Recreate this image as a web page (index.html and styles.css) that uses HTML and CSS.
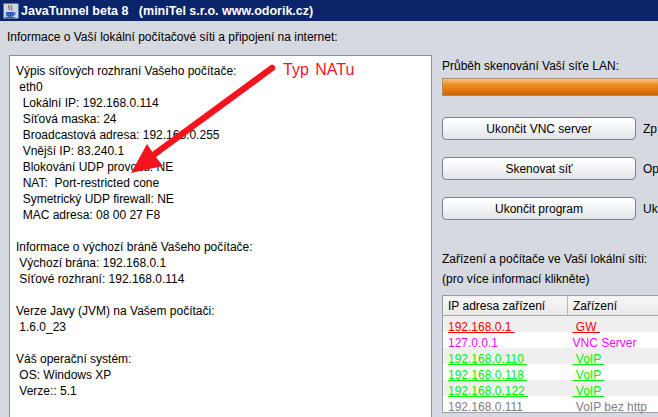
FILE: index.html
```html
<!DOCTYPE html>
<html lang="cs">
<head>
    <meta charset="UTF-8">
    <title>JavaTunnel beta 8</title>
    <link rel="stylesheet" href="styles.css">
</head>
<body>
    <div class="window">
        <div class="titlebar">
            <svg class="app-icon" width="16" height="16" viewBox="0 0 16 16">
                <rect x="0.5" y="0.5" width="15" height="15" rx="1" fill="#c9d6ea" stroke="#5b77a8"/>
                <path d="M6 2 C4.5 4 7.5 5 6 7" stroke="#e2531c" stroke-width="1.3" fill="none"/>
                <path d="M8.5 2.5 C7 4.5 10 5.5 8.5 7.5" stroke="#e2531c" stroke-width="1.3" fill="none"/>
                <path d="M3 9 h8 v2.5 c0 1.5 -1.5 2.5 -4 2.5 c-2.5 0 -4 -1 -4 -2.5 z" fill="#2f5fb0"/>
                <path d="M11 9.5 c2 0 2 2.5 0 2.5" stroke="#2f5fb0" stroke-width="1" fill="none"/>
                <rect x="2" y="14" width="10" height="1" fill="#2f5fb0"/>
            </svg>
            <span class="title">JavaTunnel beta 8   (miniTel s.r.o. www.odorik.cz)</span>
        </div>

        <div class="heading">Informace o Vaší lokální počítačové síti a připojení na internet:</div>

        <div class="main">
            <!-- výpis informací o síti -->
            <div class="info-panel">
<pre class="info">Výpis síťových rozhraní Vašeho počítače:
 eth0
  Lokální IP: 192.168.0.114
  Síťová maska: 24
  Broadcastová adresa: 192.168.0.255
  Vnější IP: 83.240.1
  Blokování UDP provozu: NE
  NAT:  Port-restricted cone
  Symetrický UDP firewall: NE
  MAC adresa: 08 00 27 F8

Informace o výchozí bráně Vašeho počítače:
 Výchozí brána: 192.168.0.1
 Síťové rozhraní: 192.168.0.114

Verze Javy (JVM) na Vašem počítači:
 1.6.0_23

Váš operační systém:
 OS: Windows XP
 Verze:: 5.1</pre>
            </div>

            <div class="side">
                <div class="label">Průběh skenování Vaší síťe LAN:</div>
                <div class="progress"></div>

                <div class="actions">
                    <div class="action">
                        <button class="button">Ukončit VNC server</button>
                        <span class="hint">Zp</span>
                    </div>
                    <div class="action">
                        <button class="button">Skenovat síť</button>
                        <span class="hint">Op</span>
                    </div>
                    <div class="action">
                        <button class="button">Ukončit program</button>
                        <span class="hint">Uk</span>
                    </div>
                </div>

                <div class="devices-label first">Zařízení a počítače ve Vaší lokální síti:</div>
                <div class="devices-label">(pro více informací klikněte)</div>

                <table class="devices">
                    <thead>
                        <tr><th class="col-ip">IP adresa zařízení</th><th>Zařízení</th></tr>
                    </thead>
                    <tbody>
                        <tr class="gw"><td><u>192.168.0.1 </u></td><td><u> GW </u></td></tr>
                        <tr class="vnc"><td>127.0.0.1</td><td>VNC Server</td></tr>
                        <tr class="voip"><td><u>192.168.0.110 </u></td><td><u> VoIP </u></td></tr>
                        <tr class="voip"><td><u>192.168.0.118 </u></td><td><u> VoIP </u></td></tr>
                        <tr class="voip"><td><u>192.168.0.122 </u></td><td><u> VoIP </u></td></tr>
                        <tr class="other"><td>192.168.0.111</td><td> VoIP bez http</td></tr>
                    </tbody>
                </table>
            </div>
        </div>

        <!-- popisek s šipkou na typ NATu -->
        <svg class="arrow" width="658" height="417" viewBox="0 0 658 417">
            <line x1="272" y1="68" x2="152" y2="156" stroke="#f5141e" stroke-width="6.5" stroke-linecap="round"/>
            <polygon points="131,173 147,144 155,156 163,166" fill="#f5141e"/>
        </svg>
        <div class="note">Typ NATu</div>
    </div>
</body>
</html>
```

FILE: styles.css
```css
body {
    margin: 0;
    font-family: 'Liberation Sans', Arial, sans-serif;
    font-size: 12px;
    color: #000;
}
.window {
    position: relative;
    width: 658px;
    height: 417px;
    overflow: hidden;
    background-color: #d6d9df;
}
.titlebar {
    height: 21px;
    display: flex;
    align-items: center;
    padding-left: 3px;
    background-color: #0a246a;
    color: white;
}
.app-icon {
    flex: none;
    margin-right: 2px;
}
.title {
    white-space: pre;
    font-family: 'Liberation Sans', Arial, sans-serif;
    font-weight: bold;
    font-size: 12.5px;
}
.heading {
    margin: 9px 0 0 7px;
    line-height: 14px;
}
.main {
    display: flex;
    margin: 11px 0 0 9px;
}
.info-panel {
    flex: none;
    width: 408px;
    height: 380px;
    padding: 7px 7px 0 6px;
    background: white;
    border: 1px solid #8c8f95;
}
.info {
    margin: 0;
    font-family: inherit;
    font-size: 12px;
    line-height: 16px;
}
.side {
    flex: none;
    width: 260px;
    margin-left: 10px;
    padding-top: 4px;
}
.label {
    line-height: 14px;
    white-space: nowrap;
}
.progress {
    margin-top: 5px;
    height: 16px;
    border: 1px solid #b08a66;
    background: linear-gradient(#f7c68a, #ec8d26 35%, #e07810 70%, #c96400);
}
.actions {
    display: flex;
    flex-direction: column;
    gap: 17px;
    margin-top: 21px;
}
.action {
    display: flex;
    align-items: center;
}
.button {
    width: 194px;
    height: 23px;
    padding: 0;
    font-family: inherit;
    font-size: 12px;
    color: #000;
    border: 1px solid #7d8189;
    border-radius: 4px;
    background: linear-gradient(#ffffff, #f3f4f6 50%, #e0e2e6);
}
.hint {
    margin-left: 7px;
    white-space: nowrap;
}
.devices-label {
    line-height: 20px;
    white-space: nowrap;
}
.devices-label.first {
    margin-top: 29px;
}
.devices {
    margin-top: 6px;
    width: 300px;
    border-collapse: collapse;
    border: 1px solid #9a9da3;
    background: white;
}
.devices th {
    height: 19px;
    padding: 0 5px;
    text-align: left;
    font-weight: normal;
    background: linear-gradient(#f7f7f7, #e9e9e9);
    border-bottom: 1px solid #a8a8a8;
    border-right: 1px solid #b8b8b8;
}
.devices .col-ip {
    width: 114px;
}
.devices tbody tr {
    height: 16px;
}
.devices td {
    padding: 6px 5px 0;
    line-height: 10px;
    vertical-align: top;
    white-space: pre;
}
.devices tbody tr:nth-child(odd) {
    background-color: #efefef;
}
.gw { color: #ff0000; }
.vnc { color: #ff00ff; }
.voip { color: #00f000; }
.other { color: #808080; }
.arrow {
    position: absolute;
    left: 0;
    top: 0;
    pointer-events: none;
}
.note {
    position: absolute;
    left: 283px;
    top: 61px;
    font-size: 16px;
    color: #f5141e;
    word-spacing: 2px;
}
```
